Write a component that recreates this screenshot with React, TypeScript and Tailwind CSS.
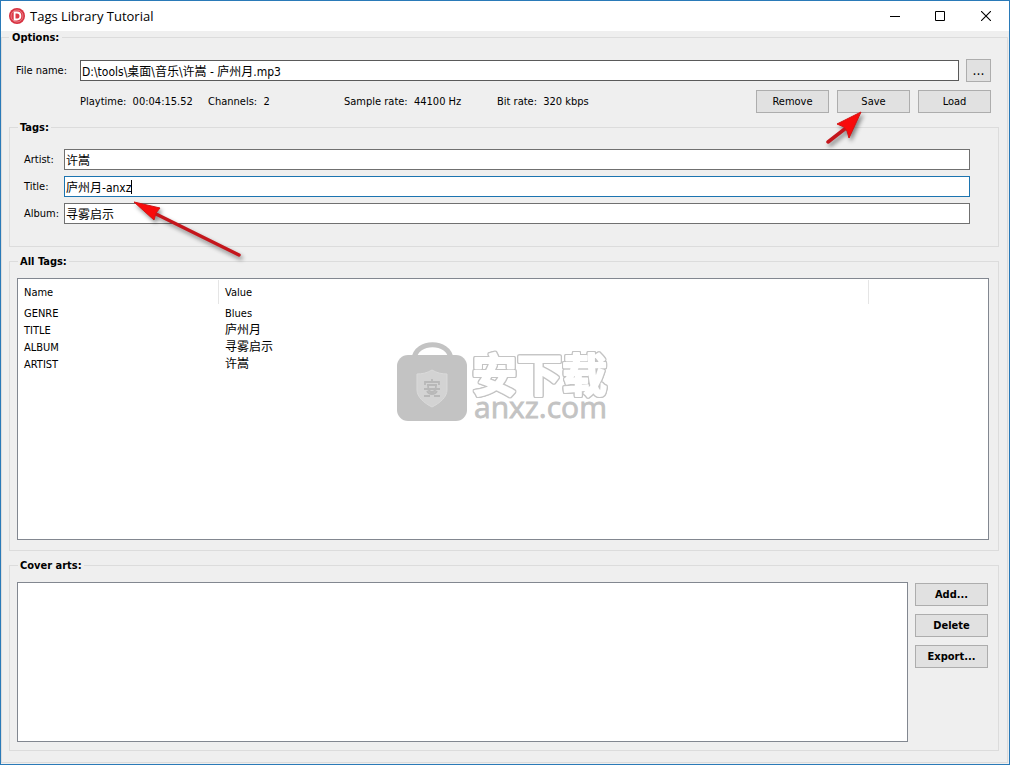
import React, { useState } from 'react';

interface Tag {
    name: string;
    value: string;
}

interface TextRowProps {
    id: string;
    label: string;
    value: string;
    onChange: (value: string) => void;
    active?: boolean;
    children?: React.ReactNode;
}

const ALL_TAGS: Tag[] = [
    { name: 'GENRE', value: 'Blues' },
    { name: 'TITLE', value: '庐州月' },
    { name: 'ALBUM', value: '寻雾启示' },
    { name: 'ARTIST', value: '许嵩' },
];

const Button: React.FC<{ children: React.ReactNode; bold?: boolean }> = ({ children, bold }) => (
    <button
        type="button"
        className={`w-[73px] h-[23px] shrink-0 border border-[#adadad] bg-[#e1e1e1] hover:border-[#0078d7] hover:bg-[#e5f1fb] ${bold ? 'font-bold' : ''}`}
    >
        {children}
    </button>
);

const TextRow: React.FC<TextRowProps> = ({ id, label, value, onChange, active, children }) => (
    <div className={`relative flex items-center h-[21px] ${active ? 'z-10' : ''}`}>
        <label htmlFor={id} className="w-10 shrink-0">{label}</label>
        <input
            id={id}
            type="text"
            value={value}
            onChange={(e) => onChange(e.target.value)}
            className={`flex-1 min-w-0 h-full px-px text-xs bg-white border outline-none ${active ? 'border-[#1c74b0]' : 'border-[#707070]'}`}
        />
        {children}
    </div>
);

const Arrow: React.FC<{ className: string; width: number; height: number; shaft: string; head: string }> = ({ className, width, height, shaft, head }) => (
    <svg className={className} width={width} height={height} viewBox={`0 0 ${width} ${height}`} fill="none" aria-hidden="true">
        <path d={shaft} stroke="#c4161c" strokeWidth="3.5" strokeLinecap="round" />
        <path d={head} fill="#f80b0b" stroke="#d21414" strokeWidth="1" strokeLinejoin="round" />
    </svg>
);

const Watermark = () => (
    <svg
        className="absolute top-[46px] left-1/2 -translate-x-1/2 pointer-events-none"
        width="216"
        height="108"
        viewBox="-1 -16 216 108"
        fill="none"
        aria-hidden="true"
    >
        <path d="M18 18C20 -1 53 -1 55 18" stroke="#c3c3c3" strokeWidth="5" />
        <rect x="1" y="14" width="70" height="66" rx="11" fill="#c3c3c3" />
        <path d="M36 29c5 3 10 4 15 4v16c0 7-7 13-15 17-8-4-15-10-15-17V33c5 0 10-1 15-4z" fill="#d3d3d3" stroke="#dadada" />
        <path
            d="M36 38v3M29 44v-3h14v3M31 44h10M28 48h16M32 44c0 5 1 7 4 7s4-2 4-7M31 50c2 4 8 4 10 0M28 55h6M38 55h6"
            stroke="#b8b8b8"
            strokeWidth="1.8"
        />
        <text
            x="76"
            y="51"
            fontFamily="'Noto Sans CJK SC', sans-serif"
            fontWeight="700"
            fontSize="45"
            fill="#ffffff"
            stroke="#ffffff"
            strokeWidth="2"
            strokeLinejoin="round"
            className="[filter:drop-shadow(1px_0_0_#c4c4c4)_drop-shadow(-1px_0_0_#c4c4c4)_drop-shadow(0_1px_0_#c4c4c4)_drop-shadow(0_-1px_0_#c4c4c4)]"
        >
            安下载
        </text>
        <text x="78" y="77" fontFamily="'Open Sans', sans-serif" fontSize="30" fill="#c3c3c3" stroke="#c3c3c3" strokeWidth="0.8">anxz.com</text>
    </svg>
);

const TitleBar = () => (
    <header className="flex items-center h-[30px] shrink-0 pl-2 bg-white">
        <svg width="16" height="16" viewBox="0 0 16 16" fill="none" aria-hidden="true">
            <circle cx="8" cy="8" r="8" fill="#d7303f" />
            <circle cx="8" cy="8" r="6" fill="#dc3a47" stroke="#f0a9af" strokeWidth="0.6" />
            <path d="M5.6 4.5h2.2c2.3 0 3.6 1.3 3.6 3.5s-1.3 3.5-3.6 3.5H5.6z" stroke="#ffffff" strokeWidth="1.8" />
        </svg>
        <h1 className="ml-[5px] flex-1 font-['Open_Sans',sans-serif] text-[13px]">Tags Library Tutorial</h1>
        <button type="button" aria-label="Minimize" className="flex items-center justify-center w-[45px] h-full hover:bg-[#e5e5e5]">
            <svg width="10" height="10" viewBox="0 0 10 10"><path d="M0 5.5h10" stroke="#000" /></svg>
        </button>
        <button type="button" aria-label="Maximize" className="flex items-center justify-center w-[46px] h-full hover:bg-[#e5e5e5]">
            <svg width="10" height="10" viewBox="0 0 10 10" fill="none"><path d="M.5.5h9v9h-9z" stroke="#000" /></svg>
        </button>
        <button type="button" aria-label="Close" className="flex items-center justify-center w-[46px] h-full hover:bg-[#e81123]">
            <svg width="10" height="10" viewBox="0 0 10 10" fill="none"><path d="M0 0l10 10M10 0L0 10" stroke="#000" strokeWidth="1.1" /></svg>
        </button>
    </header>
);

const App = () => {
    const [fileName, setFileName] = useState('D:\\tools\\桌面\\音乐\\许嵩 - 庐州月.mp3');
    const [artist, setArtist] = useState('许嵩');
    const [title, setTitle] = useState('庐州月-anxz');
    const [album, setAlbum] = useState('寻雾启示');

    return (
        <div className="min-h-screen flex flex-col border border-[#2a7ab8] bg-[#efefef] text-black text-[11px] leading-[13px] font-['DejaVu_Sans_Condensed','Noto_Sans_CJK_SC',sans-serif]">
            <TitleBar />

            <fieldset className="flex-1 min-w-0 mr-px mb-px pl-[7px] pr-2 pb-[11px] border border-[#dcdcdc]">
                <legend className="px-[3px] font-bold">Options:</legend>

                <div className="flex items-center mt-[15px] pl-[7px] pr-2">
                    <label htmlFor="file" className="w-16 shrink-0">File name:</label>
                    <input
                        id="file"
                        type="text"
                        value={fileName}
                        onChange={(e) => setFileName(e.target.value)}
                        className="flex-1 min-w-0 h-[21px] px-px text-xs bg-white border border-[#5a5a5a] outline-none"
                    />
                    <button type="button" className="w-[25px] h-[23px] ml-[7px] border border-[#adadad] bg-[#e1e1e1] text-sm leading-[13px]">...</button>
                </div>

                <div className="flex items-center mt-2 pl-[71px] pr-2">
                    <div className="flex flex-1 whitespace-pre">
                        <span className="w-32">Playtime:  00:04:15.52</span>
                        <span className="w-[136px]">Channels:  2</span>
                        <span className="w-[153px]">Sample rate:  44100 Hz</span>
                        <span>Bit rate:  320 kbps</span>
                    </div>
                    <div className="flex gap-2">
                        <Button>Remove</Button>
                        <div className="relative">
                            <Button>Save</Button>
                            <Arrow
                                className="absolute top-5 -left-3 pointer-events-none drop-shadow-[2px_3px_2px_rgba(0,0,0,0.45)]"
                                width={38}
                                height={36}
                                shaft="M3 32L21 18"
                                head="M36 2L12 14l7 3 3 4 2 7z"
                            />
                        </div>
                        <Button>Load</Button>
                    </div>
                </div>

                <fieldset className="mt-2 px-[7px] pb-[22px] border border-[#dcdcdc]">
                    <legend className="ml-[1px] px-[2px] font-bold">Tags:</legend>
                    <div className="flex flex-col gap-1.5 mt-[15px] pl-[7px] pr-[21px]">
                        <TextRow id="artist" label="Artist:" value={artist} onChange={setArtist} />
                        <TextRow id="title" label="Title:" value={title} onChange={setTitle} active>
                            <span className="absolute left-[107px] top-1 w-px h-[14px] bg-black" />
                            <Arrow
                                className="absolute left-[108px] top-6 pointer-events-none drop-shadow-[2px_3px_2px_rgba(0,0,0,0.45)]"
                                width={112}
                                height={60}
                                shaft="M24 14L107 55"
                                head="M2 2L28 8l-4 5-2 7z"
                            />
                        </TextRow>
                        <TextRow id="album" label="Album:" value={album} onChange={setAlbum} />
                    </div>
                </fieldset>

                <fieldset className="mt-2 pl-[7px] pr-[9px] pb-2.5 border border-[#dcdcdc]">
                    <legend className="ml-[1px] px-[2px] font-bold">All Tags:</legend>
                    <div className="relative mt-2.5 min-h-[262px] border border-[#828790] bg-white">
                        <table className="w-full table-fixed text-left">
                            <thead>
                                <tr className="h-[26px]">
                                    <th className="w-[201px] p-0 font-normal">
                                        <div className="flex items-center h-6 pl-1.5 border-r border-[#e5e5e5]">Name</div>
                                    </th>
                                    <th className="w-[650px] p-0 font-normal">
                                        <div className="flex items-center h-6 pl-1.5 border-r border-[#e5e5e5]">Value</div>
                                    </th>
                                    <th className="p-0" />
                                </tr>
                            </thead>
                            <tbody>
                                {ALL_TAGS.map((tag) => (
                                    <tr key={tag.name} className="h-[17px]">
                                        <td className="p-0 pl-1.5">{tag.name}</td>
                                        <td className={`p-0 pl-1.5 ${tag.name === 'GENRE' ? '' : 'text-xs leading-[13px]'}`}>{tag.value}</td>
                                        <td className="p-0" />
                                    </tr>
                                ))}
                            </tbody>
                        </table>
                        <Watermark />
                    </div>
                </fieldset>

                <fieldset className="mt-2 pl-[7px] pr-2.5 pb-2 border border-[#dcdcdc]">
                    <legend className="ml-[1px] px-[2px] font-bold">Cover arts:</legend>
                    <div className="flex gap-[7px] mt-2.5">
                        <div className="flex-1 h-40 border border-[#828790] bg-white" />
                        <div className="flex flex-col gap-2 pt-px">
                            <Button bold>Add...</Button>
                            <Button bold>Delete</Button>
                            <Button bold>Export...</Button>
                        </div>
                    </div>
                </fieldset>
            </fieldset>
        </div>
    );
};

export default App;
